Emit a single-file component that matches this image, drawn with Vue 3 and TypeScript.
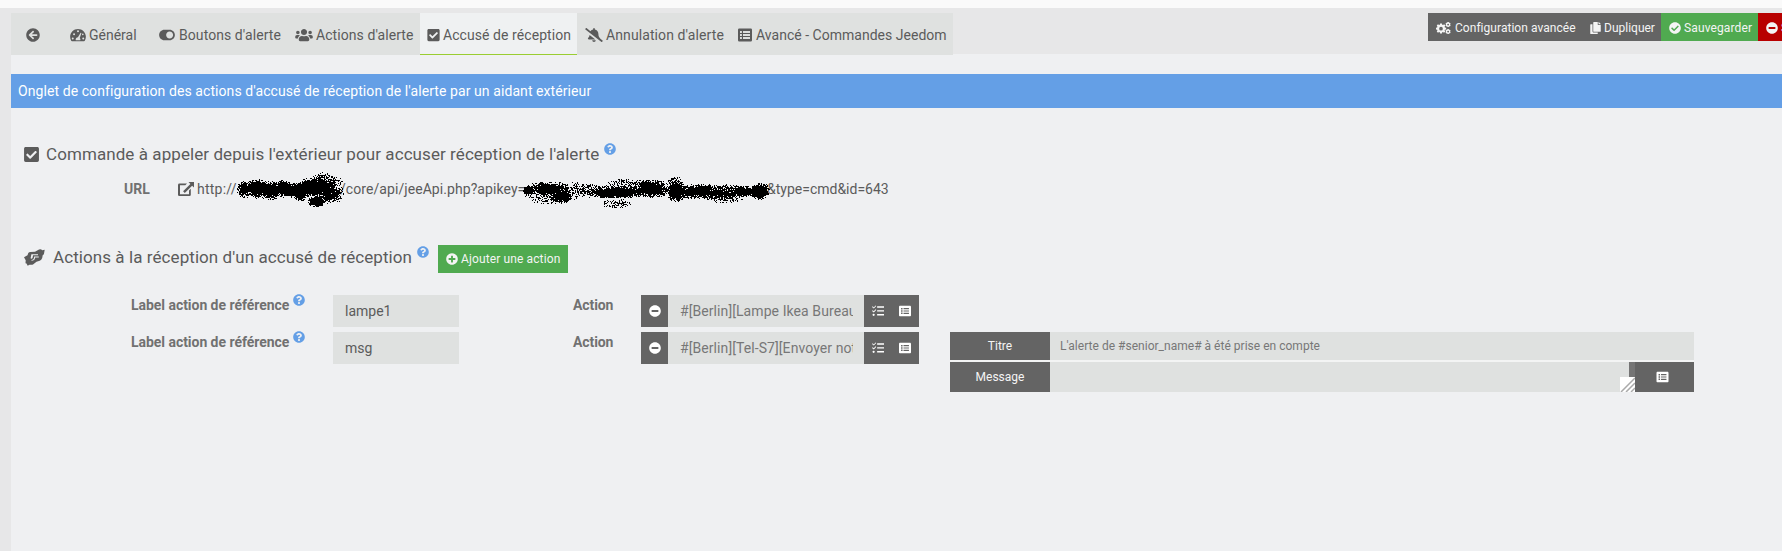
<script setup lang="ts">
interface Tab {
  id: string
  label: string
  icon: string
  iconWidth: number
  active?: boolean
}

interface Blob {
  x: number
  y: number
  rx: number
  ry: number
  density: number
}

interface ActionRow {
  label: string
  command: string
}

interface IconDef {
  box: string
  d: string
}

const icons: Record<string, IconDef> = {
  back: { box: '0 0 512 512', d: 'M256 504C119 504 8 393 8 256S119 8 256 8s248 111 248 248-111 248-248 248zm28.9-143.6L209.4 288H392c13.3 0 24-10.7 24-24v-16c0-13.3-10.7-24-24-24H209.4l75.5-72.4c9.7-9.3 9.9-24.8.4-34.3l-11-10.9c-9.4-9.4-24.6-9.4-33.9 0L107.7 239c-9.4 9.4-9.4 24.6 0 33.9l132.7 132.7c9.4 9.4 24.6 9.4 33.9 0l11-10.9c9.5-9.5 9.3-25-.4-34.3z' },
  gauge: { box: '0 0 576 512', d: 'M288 32C129 32 0 161 0 320c0 53 14 102 39 145 6 10 16 15 28 15h442c12 0 22-5 28-15 25-43 39-92 39-145C576 161 447 32 288 32zM288 80a36 36 0 1 1 0 72 36 36 0 0 1 0-72zM96 420a36 36 0 1 1 0-72 36 36 0 0 1 0 72zm48-156a36 36 0 1 1 0-72 36 36 0 0 1 0 72zm239-88l30 10-61 182c24 22 29 50 18 80H206c-18-60 24-108 79-112zm97 244a36 36 0 1 1 0-72 36 36 0 0 1 0 72zm-16-156a30 30 0 1 1 0-60 30 30 0 0 1 0 60z' },
  toggle: { box: '0 0 576 512', d: 'M384 64H192C86 64 0 150 0 256s86 192 192 192h192c106 0 192-86 192-192S490 64 384 64zm0 320c-71 0-128-57-128-128s57-128 128-128 128 57 128 128-57 128-128 128z' },
  users: { box: '0 0 640 512', d: 'M96 224c35.3 0 64-28.7 64-64s-28.7-64-64-64-64 28.7-64 64 28.7 64 64 64zm448 0c35.3 0 64-28.7 64-64s-28.7-64-64-64-64 28.7-64 64 28.7 64 64 64zm32 32h-64c-17.6 0-33.5 7.1-45.1 18.6 40.3 22.1 68.9 62 75.1 109.4h66c17.7 0 32-14.3 32-32v-32c0-35.3-28.7-64-64-64zm-256 0c61.9 0 112-50.1 112-112S381.9 32 320 32 208 82.1 208 144s50.1 112 112 112zm76.8 32h-8.3c-20.8 10-43.9 16-68.5 16s-47.6-6-68.5-16h-8.3C179.6 288 128 339.6 128 403.2V432c0 26.5 21.5 48 48 48h288c26.5 0 48-21.5 48-48v-28.8c0-63.6-51.6-115.2-115.2-115.2zm-223.7-13.4C161.5 263.1 145.6 256 128 256H64c-35.3 0-64 28.7-64 64v32c0 17.7 14.3 32 32 32h65.9c6.3-47.4 34.9-87.3 75.2-109.4z' },
  check: { box: '0 0 448 512', d: 'M400 480H48c-26.51 0-48-21.49-48-48V80c0-26.51 21.49-48 48-48h352c26.51 0 48 21.49 48 48v352c0 26.51-21.49 48-48 48zm-204.686-98.059l184-184c6.248-6.248 6.248-16.379 0-22.627l-22.627-22.627c-6.248-6.248-16.379-6.249-22.628 0L184 302.745l-70.059-70.059c-6.248-6.248-16.379-6.248-22.628 0l-22.627 22.627c-6.248 6.248-6.248 16.379 0 22.627l104 104c6.249 6.25 16.379 6.25 22.628.001z' },
  bell: { box: '0 0 640 512', d: 'M633.82 458.1l-90.62-70.05c.19-1.38.8-2.66.8-4.06.05-7.55-2.61-15.27-8.61-21.71-19.32-20.76-55.47-51.99-55.47-154.29 0-77.7-54.48-139.9-127.94-155.16V32c0-17.67-14.32-32-31.98-32s-31.98 14.33-31.98 32v20.84c-40.33 8.38-74.66 31.07-97.59 62.57L45.47 3.37C38.49-2.05 28.43-.8 23.01 6.18L3.37 31.45C-2.05 38.42-.8 48.47 6.18 53.9l588.35 454.73c6.98 5.43 17.03 4.17 22.46-2.81l19.64-25.27c5.42-6.97 4.17-17.02-2.81-22.45zM157.23 251.54c-8.61 67.96-36.41 93.33-52.62 110.75-6 6.45-8.66 14.16-8.61 21.71.11 16.4 12.98 32 32.1 32h241.12L157.23 251.54zM320 512c35.32 0 63.97-28.65 63.97-64H256.03c0 35.35 28.65 64 63.97 64z' },
  table: { box: '0 0 14 14', d: 'M1.2 .5h11.6Q14 .5 14 1.7v10.6q0 1.2-1.2 1.2H1.2Q0 13.5 0 12.3V1.7Q0 .5 1.2 .5zM2 3v1.9h1.9V3zm3 0v1.9h7V3zM2 6v1.9h1.9V6zm3 0v1.9h7V6zM2 9v2h1.9V9zm3 0v2h7V9z' },
  listAlt: { box: '0 0 512 512', d: 'M464 480H48c-26.5 0-48-21.5-48-48V80c0-26.5 21.5-48 48-48h416c26.5 0 48 21.5 48 48v352c0 26.5-21.5 48-48 48zM88 124v64h64v-64zm104 8v48h232v-48zM88 224v64h64v-64zm104 8v48h232v-48zM88 324v64h64v-64zm104 8v48h232v-48z' },
  tasks: { box: '0 0 14 14', d: 'M.8 1.6l1.3 1.2L4.2.5l.7.7-2.8 3L0 2.4zM.8 6.2l1.3 1.2 2.1-2.3.7.7-2.8 3L0 7zM1.9 10.2a1.3 1.3 0 1 1 0 2.6 1.3 1.3 0 0 1 0-2.6zM6 1.5h8v1.7H6zM6 6h8v1.7H6zM6 10.6h8v1.7H6z' },
  cogs: { box: '0 0 16 13', d: 'M4.3 1.5h2l.3 1.4.9.4 1.2-.8 1.3 1.4-.8 1.2.3.8 1.4.3v1.9l-1.4.3-.3.8.8 1.2-1.4 1.3-1.2-.8-.8.3-.3 1.3h-2L4 11.2l-.8-.3-1.2.8L.7 10.4l.7-1.2-.3-.8L-.2 8.1V6.2l1.3-.3.3-.8L.7 3.9 2 2.5l1.2.8.8-.4zM5.3 5.2a2 2 0 1 0 0 4 2 2 0 0 0 0-4zM12.3 0h1.4l.3.8 1-.1.7 1.2-.6.8.6.9-.7 1.2-1-.2-.3.9h-1.4l-.4-.9-.9.2-.8-1.2.6-.9-.6-.8.8-1.2.9.1zM13 1.8a1 1 0 1 0 0 2 1 1 0 0 0 0-2zM12.3 7.6h1.4l.3.8 1-.1.7 1.2-.6.8.6.9-.7 1.2-1-.2-.3.9h-1.4l-.4-.9-.9.2-.8-1.2.6-.9-.6-.8.8-1.2.9.1zM13 9.4a1 1 0 1 0 0 2 1 1 0 0 0 0-2z' },
  copy: { box: '0 0 448 512', d: 'M320 448v40c0 13.255-10.745 24-24 24H24c-13.255 0-24-10.745-24-24V120c0-13.255 10.745-24 24-24h72v296c0 30.879 25.121 56 56 56h168zm0-344V0H152c-13.255 0-24 10.745-24 24v368c0 13.255 10.745 24 24 24h272c13.255 0 24-10.745 24-24V128H344c-13.2 0-24-10.8-24-24zm120.971-31.029L375.029 7.029A24 24 0 0 0 358.059 0H352v96h96v-6.059a24 24 0 0 0-7.029-16.97z' },
  ok: { box: '0 0 512 512', d: 'M504 256c0 136.967-111.033 248-248 248S8 392.967 8 256 119.033 8 256 8s248 111.033 248 248zM227.314 387.314l184-184c6.248-6.248 6.248-16.379 0-22.627l-22.627-22.627c-6.248-6.249-16.379-6.249-22.628 0L216 308.118l-70.059-70.059c-6.248-6.248-16.379-6.248-22.628 0l-22.627 22.627c-6.248 6.248-6.248 16.379 0 22.627l104 104c6.249 6.249 16.379 6.249 22.628.001z' },
  minus: { box: '0 0 512 512', d: 'M256 8C119 8 8 119 8 256s111 248 248 248 248-111 248-248S393 8 256 8zM124 296c-6.6 0-12-5.4-12-12v-56c0-6.6 5.4-12 12-12h264c6.6 0 12 5.4 12 12v56c0 6.6-5.4 12-12 12H124z' },
  plus: { box: '0 0 512 512', d: 'M256 8C119 8 8 119 8 256s111 248 248 248 248-111 248-248S393 8 256 8zm144 276c0 6.6-5.4 12-12 12h-92v92c0 6.6-5.4 12-12 12h-56c-6.6 0-12-5.4-12-12v-92h-92c-6.6 0-12-5.4-12-12v-56c0-6.6 5.4-12 12-12h92v-92c0-6.6 5.4-12 12-12h56c6.6 0 12 5.4 12 12v92h92c6.6 0 12 5.4 12 12v56z' },
  help: { box: '0 0 512 512', d: 'M504 256c0 136.997-111.043 248-248 248S8 392.997 8 256C8 119.083 119.043 8 256 8s248 111.083 248 248zM262.655 90c-54.497 0-89.255 22.957-116.549 63.758-3.536 5.286-2.353 12.415 2.715 16.258l34.699 26.31c5.205 3.947 12.621 3.008 16.665-2.122 17.864-22.658 30.113-35.797 57.303-35.797 20.429 0 45.698 13.148 45.698 32.958 0 14.976-12.363 22.667-32.534 33.976C247.128 238.528 216 254.941 216 296v4c0 6.627 5.373 12 12 12h56c6.627 0 12-5.373 12-12v-1.333c0-28.462 83.186-29.647 83.186-106.667 0-58.002-60.165-102-116.531-102zM256 338c-25.365 0-46 20.635-46 46 0 25.364 20.635 46 46 46s46-20.636 46-46c0-25.365-20.635-46-46-46z' },
  external: { box: '0 0 16 14', d: 'M1.5 1.5H9L7.3 3.3H2v8.9h9V8.5l1.8-1.8v6Q12.8 14 11.5 14H1.3Q0 14 0 12.7V2.9Q0 1.5 1.5 1.5zM10.5 0H16v5.5l-1.9-1.8-7.3 7.2-1.7-1.7 7.3-7.3z' },
  hands: { box: '0 0 21 17', d: 'M0 8.3L3.5 6.3 4.300 4Q5 3 6.300 3L11 2.700 15 .6Q17-.2 18.200 1.200L20.700.8 19.900 5.200 18.700 6.300 18.200 9Q17.500 11 15.700 11.800L12.500 12.800 9 15.600Q8 16 5.500 15.700L3.700 16.800 2.500 14.500 1.500 14.200 1.700 11.300zM7.400 5.200L6.600 9.200Q7 9.900 8 9.500 8.700 9.200 8.700 8.300L9 6.300H14V5.200zM10.200 7.400L9.900 9.200Q9.600 10.800 7.500 10.900V11.800Q10.800 11.700 11.100 8.500H14.800V7.400z' },
}

const tabs: Tab[] = [
  { id: 'general', label: 'Général', icon: 'gauge', iconWidth: 16 },
  { id: 'buttons', label: "Boutons d'alerte", icon: 'toggle', iconWidth: 16 },
  { id: 'actions', label: "Actions d'alerte", icon: 'users', iconWidth: 18 },
  { id: 'ack', label: 'Accusé de réception', icon: 'check', iconWidth: 13, active: true },
  { id: 'cancel', label: "Annulation d'alerte", icon: 'bell', iconWidth: 18 },
  { id: 'advanced', label: 'Avancé - Commandes Jeedom', icon: 'table', iconWidth: 14 },
]

const rows: ActionRow[] = [
  { label: 'lampe1', command: '#[Berlin][Lampe Ikea Bureau' },
  { label: 'msg', command: '#[Berlin][Tel-S7][Envoyer not' },
]

/* Pixel spray used to mask the private parts of the URL. */
function spray(blobs: Blob[], seed: number): string {
  let state = seed
  const random = () => {
    state = (state * 1664525 + 1013904223) >>> 0
    return state / 4294967296
  }
  const pixels = new Set<string>()
  for (const b of blobs) {
    for (let y = Math.ceil(b.y - b.ry); y <= b.y + b.ry; y++) {
      for (let x = Math.ceil(b.x - b.rx); x <= b.x + b.rx; x++) {
        const r = ((x - b.x) / b.rx) ** 2 + ((y - b.y) / b.ry) ** 2
        if (r <= 1 && random() < b.density * (1.3 - r * 1.15)) pixels.add(`M${x} ${y}h1v1h-1z`)
      }
    }
  }
  return [...pixels].join('')
}

const hostMask = spray([
  { x: 7, y: 17, rx: 8, ry: 9, density: 0.9 },
  { x: 19, y: 16, rx: 11, ry: 10, density: 1.1 },
  { x: 33, y: 18, rx: 12, ry: 10, density: 1 },
  { x: 46, y: 16, rx: 10, ry: 9, density: 1.1 },
  { x: 58, y: 18, rx: 12, ry: 8, density: 1.1 },
  { x: 63, y: 24, rx: 6, ry: 5, density: 1.1 },
  { x: 72, y: 15, rx: 14, ry: 10, density: 1.1 },
  { x: 85, y: 12, rx: 14, ry: 12, density: 0.8 },
  { x: 90, y: 20, rx: 13, ry: 11, density: 0.8 },
  { x: 79, y: 29, rx: 9, ry: 6, density: 1.2 },
  { x: 98, y: 21, rx: 9, ry: 9, density: 0.6 },
  { x: 97, y: 9, rx: 9, ry: 6, density: 0.35 },
], 71)

const keyMask = spray([
  { x: 5, y: 11, rx: 6, ry: 5, density: 1.5 },
  { x: 25, y: 9, rx: 24, ry: 7, density: 0.9 },
  { x: 38, y: 17, rx: 12, ry: 7, density: 1 },
  { x: 27, y: 17, rx: 25, ry: 8, density: 0.4 },
  { x: 53, y: 12, rx: 8, ry: 12, density: 0.25 },
  { x: 66, y: 11, rx: 20, ry: 7, density: 0.5 },
  { x: 93, y: 13, rx: 32, ry: 6, density: 1.1 },
  { x: 93, y: 24, rx: 15, ry: 5, density: 0.4 },
  { x: 104, y: 7, rx: 25, ry: 8, density: 0.4 },
  { x: 128, y: 9, rx: 19, ry: 10, density: 0.95 },
  { x: 153, y: 12, rx: 11, ry: 11, density: 1 },
  { x: 152, y: 2, rx: 8, ry: 5, density: 0.6 },
  { x: 175, y: 12, rx: 28, ry: 8, density: 0.9 },
  { x: 200, y: 14, rx: 24, ry: 10, density: 0.65 },
  { x: 221, y: 12, rx: 23, ry: 6, density: 0.9 },
  { x: 237, y: 12, rx: 10, ry: 9, density: 1.1 },
], 29)
</script>

<template>
  <div class="page">
    <header class="toolbar">
      <nav class="tabs">
        <a class="tab tab-back">
          <svg class="icon" width="14" height="14" :viewBox="icons.back.box"><path :d="icons.back.d" /></svg>
        </a>
        <a v-for="tab in tabs" :key="tab.id" class="tab" :class="['tab-' + tab.id, { active: tab.active }]">
          <svg class="icon" :width="tab.iconWidth" height="14" :viewBox="icons[tab.icon].box"><path fill-rule="evenodd" :d="icons[tab.icon].d" /></svg>
          <span>{{ tab.label }}</span>
        </a>
      </nav>
      <div class="buttons">
        <button class="btn config">
          <svg class="icon" width="15" height="12" :viewBox="icons.cogs.box"><path fill-rule="evenodd" :d="icons.cogs.d" /></svg>
          <span>Configuration avancée</span>
        </button>
        <button class="btn copy">
          <svg class="icon" width="11" height="12" :viewBox="icons.copy.box"><path :d="icons.copy.d" /></svg>
          <span>Dupliquer</span>
        </button>
        <button class="btn success">
          <svg class="icon" width="12" height="12" :viewBox="icons.ok.box"><path fill-rule="evenodd" :d="icons.ok.d" /></svg>
          <span>Sauvegarder</span>
        </button>
        <button class="btn danger">
          <svg class="icon" width="12" height="12" :viewBox="icons.minus.box"><path fill-rule="evenodd" :d="icons.minus.d" /></svg>
          <span>Supprimer</span>
        </button>
      </div>
    </header>

    <main class="content">
      <div class="banner">Onglet de configuration des actions d'accusé de réception de l'alerte par un aidant extérieur</div>

      <h3 class="legend">
        <svg class="icon legend-check" width="15" height="17" :viewBox="icons.check.box"><path fill-rule="evenodd" :d="icons.check.d" /></svg>
        <span>Commande à appeler depuis l'extérieur pour accuser réception de l'alerte</span>
        <svg class="icon help" width="12" height="12" :viewBox="icons.help.box"><path fill-rule="evenodd" :d="icons.help.d" /></svg>
      </h3>

      <div class="url-row">
        <b class="url-label">URL</b>
        <svg class="icon" width="16" height="14" :viewBox="icons.external.box"><path fill-rule="evenodd" :d="icons.external.d" /></svg>
        <span class="url-scheme">http://</span>
        <span class="url-path">/core/api/jeeApi.php?apikey=</span>
        <span class="url-query">&amp;type=cmd&amp;id=643</span>
        <svg class="mask host" width="110" height="38" viewBox="0 0 110 38" shape-rendering="crispEdges"><path :d="hostMask" /></svg>
        <svg class="mask key" width="250" height="32" viewBox="0 -3 250 32" shape-rendering="crispEdges"><path :d="keyMask" /></svg>
      </div>

      <h3 class="legend second">
        <svg class="icon legend-hands" width="21" height="17" :viewBox="icons.hands.box"><path fill-rule="evenodd" :d="icons.hands.d" /></svg>
        <span>Actions à la réception d'un accusé de réception</span>
        <svg class="icon help" width="12" height="12" :viewBox="icons.help.box"><path fill-rule="evenodd" :d="icons.help.d" /></svg>
        <button class="btn success add">
          <svg class="icon" width="12" height="12" :viewBox="icons.plus.box"><path fill-rule="evenodd" :d="icons.plus.d" /></svg>
          <span>Ajouter une action</span>
        </button>
      </h3>

      <div class="form">
        <div v-for="(row, index) in rows" :key="row.label" class="form-row">
          <b class="ref-label">Label action de référence</b>
          <svg class="icon help" width="12" height="12" :viewBox="icons.help.box"><path fill-rule="evenodd" :d="icons.help.d" /></svg>
          <div class="field ref-field">{{ row.label }}</div>
          <b class="action-label">Action</b>
          <div class="group">
            <span class="addon remove"><svg class="icon" width="12" height="12" :viewBox="icons.minus.box"><path fill-rule="evenodd" :d="icons.minus.d" /></svg></span>
            <div class="field command"><span>{{ row.command }}</span></div>
            <span class="addon pick">
              <svg class="icon" width="12" height="12" :viewBox="icons.tasks.box"><path :d="icons.tasks.d" /></svg>
              <svg class="icon" width="12" height="12" :viewBox="icons.listAlt.box"><path fill-rule="evenodd" :d="icons.listAlt.d" /></svg>
            </span>
          </div>
          <div v-if="index === 1" class="options">
            <div class="option title">
              <span class="option-label">Titre</span>
              <span class="option-value">L'alerte de #senior_name# à été prise en compte</span>
            </div>
            <div class="option message">
              <span class="option-label">Message</span>
              <div class="option-value textarea">
                <span class="scroll"></span>
                <svg class="grip" width="15" height="15" viewBox="0 0 15 15"><path d="M0 0h15v15H0z" fill="#fff" /><path d="M1 15L15 1M6 15l9-9M11 15l4-4" stroke="#aaa" stroke-width="1.5" fill="none" /></svg>
              </div>
              <span class="option-pick"><svg class="icon" width="13" height="12" :viewBox="icons.listAlt.box"><path fill-rule="evenodd" :d="icons.listAlt.d" /></svg></span>
            </div>
          </div>
        </div>
      </div>
    </main>
  </div>
</template>

<style>
body {
  margin: 0;
  overflow: hidden;
}
</style>

<style scoped>
* {
  box-sizing: border-box;
}

.page {
  width: 1782px;
  height: 551px;
  overflow: hidden;
  padding-left: 11px;
  border-top: 8px solid #fafafa;
  background: #e7e7e8;
  color: #5b5b5b;
  font: 14px/20px Roboto, sans-serif;
}

.icon {
  display: block;
  flex: none;
  fill: currentColor;
}

span,
b {
  white-space: nowrap;
}

.toolbar {
  display: flex;
  justify-content: space-between;
  height: 46px;
  padding-top: 5px;
}

.tabs {
  display: flex;
  height: 42px;
  background: #dfe1e0;
  width: 942px;
  flex: none;
  position: relative;
  letter-spacing: 0.07px;
}

.tab {
  display: flex;
  align-items: center;
  gap: 3px;
  padding: 2px 0 0 7px;
  flex: none;
}

.tab-back { width: 52px; padding-left: 15px; }
.tab-general { width: 89px; letter-spacing: 0; }
.tab-buttons { width: 136px; gap: 4px; }
.tab-actions { width: 132px; }
.tab-ack { width: 157px; margin-right: 1px; }
.tab-cancel { width: 153px; letter-spacing: 0.1px; }
.tab-advanced { width: 222px; gap: 4px; letter-spacing: 0.02px; }

.tab.active {
  background: #eff1f2;
  border-bottom: 1px solid #9acd32;
  padding-top: 3px;
}

.buttons {
  display: flex;
  width: 354px;
  height: 28px;
  overflow: hidden;
}

.btn {
  display: flex;
  align-items: center;
  flex: none;
  gap: 3px;
  height: 28px;
  padding: 1px 0 0 8px;
  border: 0;
  color: #f4f4f4;
  background: #646464;
  font: 12px/18px Roboto, sans-serif;
  letter-spacing: 0.12px;
}

.config { width: 154px; gap: 4px; letter-spacing: 0.04px; }
.copy { width: 79px; gap: 3px; letter-spacing: 0; }
.success { width: 97px; background: #50aa50; }
.danger { width: 100px; background: #b80000; }

.content {
  height: 497px;
  padding-top: 20px;
  background: #eff0f2;
}

.banner {
  height: 34px;
  padding: 7px;
  color: #fff;
  background: #649fe6;
  letter-spacing: 0.08px;
}

.legend {
  display: flex;
  align-items: center;
  height: 28px;
  margin: 32px 0 0 13px;
  font-weight: 400;
  font-size: 17px;
  letter-spacing: 0.075px;
}

.legend-check { margin-right: 7px; }
.legend-hands { margin-right: 8px; }

.help {
  color: #649fe6;
  margin: 0 0 10px 5px;
}

.url-row {
  position: relative;
  display: flex;
  align-items: center;
  height: 20px;
  margin-top: 11px;
  padding-left: 113px;
}

.url-label { width: 54px; color: #717171; }
.url-scheme { width: 146px; padding-left: 3px; letter-spacing: 0.25px; }
.url-path { width: 427px; letter-spacing: 0.07px; }

.mask {
  position: absolute;
  fill: #000;
}

.host { left: 226px; top: -7px; }
.key { left: 512px; top: -3px; }

.legend.second { margin-top: 44px; }

.add {
  width: 130px;
  margin: 3px 0 0 9px;
}

.form {
  display: flex;
  flex-direction: column;
  gap: 5px;
  margin-top: 24px;
}

.form-row {
  display: flex;
  height: 32px;
  padding-left: 120px;
}

.ref-label {
  width: 157px;
  color: #717171;
  letter-spacing: -0.04px;
}

.form-row .help {
  margin: -1px 28px 0 5px;
}

.field {
  height: 32px;
  padding: 6px 12px;
  background: #dfe1e0;
}

.ref-field { width: 126px; }

.action-label {
  width: 68px;
  margin-left: 114px;
  color: #717171;
  letter-spacing: -0.1px;
}

.group {
  display: flex;
  width: 278px;
}

.addon {
  display: flex;
  align-items: center;
  justify-content: center;
  color: #fff;
  background: #646464;
}

.remove { width: 27px; }

.command {
  width: 196px;
  padding-right: 11px;
  color: #777;
  letter-spacing: 0.08px;
}

.command span {
  display: block;
  overflow: hidden;
}

.pick {
  width: 55px;
  gap: 15px;
}

.options {
  display: flex;
  flex-direction: column;
  gap: 2px;
  width: 744px;
  height: 60px;
  margin-left: 31px;
  background: #f3f4f4;
  font-size: 12px;
}

.option {
  display: flex;
}

.title { height: 28px; line-height: 28px; }
.message { height: 30px; line-height: 30px; }

.option-label {
  width: 100px;
  color: #f4f4f4;
  background: #646464;
  text-align: center;
}

.option-value {
  flex: 1;
  padding-left: 10px;
  color: #777;
  background: #dfe1e0;
  letter-spacing: 0.02px;
}

.textarea {
  display: flex;
  flex-direction: column;
  align-items: flex-end;
}

.scroll {
  width: 6px;
  height: 15px;
  background: #757575;
}

.grip {
  display: block;
}

.option-pick {
  display: flex;
  align-items: center;
  width: 59px;
  padding-left: 21px;
  color: #fff;
  background: #646464;
}
</style>
